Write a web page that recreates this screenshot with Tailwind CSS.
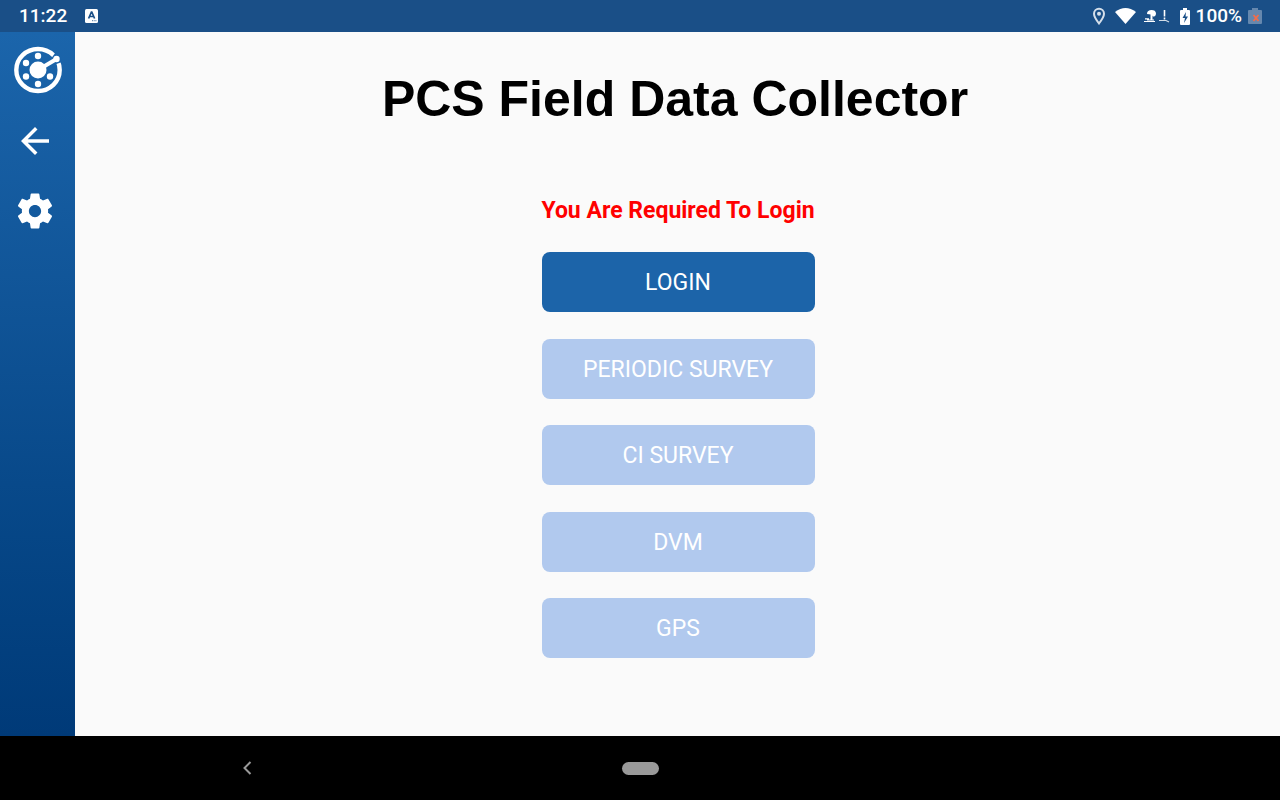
<!DOCTYPE html>
<html lang="en">
<head>
<meta charset="utf-8">
<meta name="viewport" content="width=device-width, initial-scale=1">
<title>PCS Field Data Collector</title>
<script src="https://cdn.jsdelivr.net/npm/@tailwindcss/browser@4"></script>
</head>
<body class="flex min-h-screen flex-col bg-[#fafafa] font-[Roboto,sans-serif]">
  <header class="flex h-8 items-center justify-between bg-[#1a4f87] pl-[19px] pr-[18px] text-[19px] font-medium text-white">
    <div class="flex items-center gap-[18px]">
      <span>11:22</span>
      <svg class="h-[14px] w-[13px]" viewBox="0 0 13 14" aria-hidden="true"><rect width="13" height="14" rx="1.5" fill="#fff"/><path d="M3.6 9.5 6.4 3h.4l2.8 6.500M4.700 7.500h3.800" fill="none" stroke="#1a4f87" stroke-width="1.700"/><path d="M7 11.700h5" stroke="#1a4f87" stroke-width=".8" stroke-dasharray="1 .7"/></svg>
    </div>
    <div class="flex items-center">
      <svg class="mr-[9px] h-[18px] w-[14px]" viewBox="0 0 14 18" fill="none" aria-hidden="true"><path d="M7 16.500C4.500 13.300 2 10 2 6.800a5 5 0 0 1 10 0c0 3.200-2.500 6.500-5 9.700z" stroke="#d5dfea" stroke-width="2"/><circle cx="7" cy="6.800" r="2" fill="#d5dfea"/></svg>
      <svg class="mr-2 h-4 w-[21px]" viewBox="0 0 21 16" aria-hidden="true"><path d="M0 4Q10.500-4 21 4L10.500 16z" fill="#fff"/></svg>
      <svg class="mr-[10px] h-4 w-[26px]" viewBox="0 0 26 16" fill="none" stroke="#fff" aria-hidden="true"><path d="M3 6C3 3 5 2 7.500 2S12 3 12 5.500 10.500 8.500 9 8.500L7 6.500z" fill="#fff" stroke="none"/><path d="M7.500 6v6" stroke-width="2"/><path d="M1 10.800h4M0 13.500h11M3 12h7" stroke-width="1.200"/><path d="M20.500 2v6.500M20.500 9.500v2" stroke-width="1.600"/><path d="M15 12.500h7l3 1.500" stroke-width="1.200" opacity=".8"/></svg>
      <svg class="mr-[6px] h-[17px] w-[10px]" viewBox="0 0 10 17" aria-hidden="true"><path d="M3 0h4v2h2q1 0 1 1v13q0 1-1 1H1q-1 0-1-1V3q0-1 1-1h2z" fill="#fff"/><path d="M6 4 2.500 10H5L4 15l4-6.500H5.500z" fill="#1a4f87"/></svg>
      <span>100%</span>
      <svg class="ml-[6px] h-4 w-[14px]" viewBox="0 0 14 16" aria-hidden="true"><path d="M4 0h6v2h3q1 0 1 1v12q0 1-1 1H1q-1 0-1-1V3q0-1 1-1h3z" fill="#6688ae"/><path d="m5.500 7 5 6m0-6-5 6" stroke="#f56c48" stroke-width="1.800"/></svg>
    </div>
  </header>

  <div class="flex flex-1">
    <nav class="flex w-[75px] flex-col items-center bg-linear-to-b from-[#1b65ab] to-[#003a78] pt-[14px]" aria-label="Main">
      <svg class="h-12 w-12" viewBox="0 0 48 48" fill="#fff" aria-label="PCS" role="img">
        <ellipse cx="24" cy="24" rx="21.700" ry="21" fill="none" stroke="#fff" stroke-width="4.400"/>
        <path d="M41.500 6.500 49 15.500 41 18.500 37.500 12z" fill="#1b63a9"/>
        <circle cx="24" cy="24" r="8.500"/>
        <path d="M24 24 42.500 13" stroke="#fff" stroke-width="4"/>
        <circle cx="42.500" cy="13" r="3.200"/>
        <circle cx="24" cy="10" r="3.200"/><circle cx="12" cy="17" r="3.200"/><circle cx="12" cy="30.500" r="3.200"/><circle cx="24" cy="38" r="3.200"/><circle cx="36" cy="30.500" r="3.200"/>
      </svg>
      <div class="mt-[26px] flex flex-col gap-7 pr-[6px]">
        <button type="button" class="size-[42px]" aria-label="Back"><svg class="size-full" viewBox="0 0 24 24" fill="#fff"><path d="M20 11H7.830l5.590-5.590L12 4l-8 8 8 8 1.410-1.410L7.830 13H20v-2z"/></svg></button>
        <button type="button" class="size-[42px]" aria-label="Settings"><svg class="size-full" viewBox="0 0 24 24" fill="#fff"><path d="M19.430 12.980c.04-.32.07-.64.07-.98s-.03-.66-.07-.98l2.110-1.650c.19-.15.24-.42.12-.64l-2-3.460c-.12-.22-.39-.3-.61-.22l-2.490 1c-.52-.4-1.080-.73-1.690-.98l-.38-2.650C14.460 2.180 14.250 2 14 2h-4c-.25 0-.46.18-.49.42l-.38 2.650c-.61.25-1.170.59-1.690.98l-2.490-1c-.23-.09-.49 0-.61.22l-2 3.460c-.13.22-.07.49.12.64l2.110 1.650c-.04.32-.07.65-.07.98s.03.66.07.98l-2.110 1.650c-.19.15-.24.42-.12.64l2 3.460c.12.22.39.3.61.22l2.490-1c.52.4 1.080.73 1.690.98l.38 2.650c.03.24.24.42.49.42h4c.25 0 .46-.18.49-.42l.38-2.650c.61-.25 1.170-.59 1.690-.98l2.490 1c.23.09.49 0 .61-.22l2-3.460c.12-.22.07-.49-.12-.64l-2.110-1.650zM12 15.500c-1.930 0-3.500-1.570-3.500-3.500s1.570-3.500 3.500-3.500 3.500 1.570 3.500 3.500-1.570 3.500-3.500 3.500z"/></svg></button>
      </div>
    </nav>

    <main class="flex flex-1 flex-col items-center pl-px pt-[37px]">
      <h1 class="pr-[6px] font-['Liberation_Sans',sans-serif] text-[50px]/[60px] font-bold text-black">PCS Field Data Collector</h1>
      <p class="mt-16 text-[23px]/9 font-bold text-[#ff0000]">You Are Required To Login</p>
      <div class="mt-[23px] flex h-[406px] w-[273px] flex-col justify-between text-[23px] text-white">
        <button type="button" class="h-[60px] rounded-lg bg-[#1c64a9] pt-[3px]">LOGIN</button>
        <button type="button" disabled class="h-[60px] rounded-lg bg-[#b1c9ee] pt-[3px]">PERIODIC SURVEY</button>
        <button type="button" disabled class="h-[60px] rounded-lg bg-[#b1c9ee] pt-[3px]">CI SURVEY</button>
        <button type="button" disabled class="h-[60px] rounded-lg bg-[#b1c9ee] pt-[3px]">DVM</button>
        <button type="button" disabled class="h-[60px] rounded-lg bg-[#b1c9ee] pt-[3px]">GPS</button>
      </div>
    </main>
  </div>

  <footer class="grid h-16 grid-cols-[1fr_auto_1fr] items-center bg-black">
    <button type="button" class="ml-[241px] w-3" aria-label="System back"><svg class="h-[14px] w-3" viewBox="0 0 12 14" fill="none" stroke="#999" stroke-width="2"><path d="M9.500 1 3.500 7l6 6"/></svg></button>
    <button type="button" class="h-[13px] w-[37px] rounded-full bg-[#999]" aria-label="Home"></button>
  </footer>
</body>
</html>
